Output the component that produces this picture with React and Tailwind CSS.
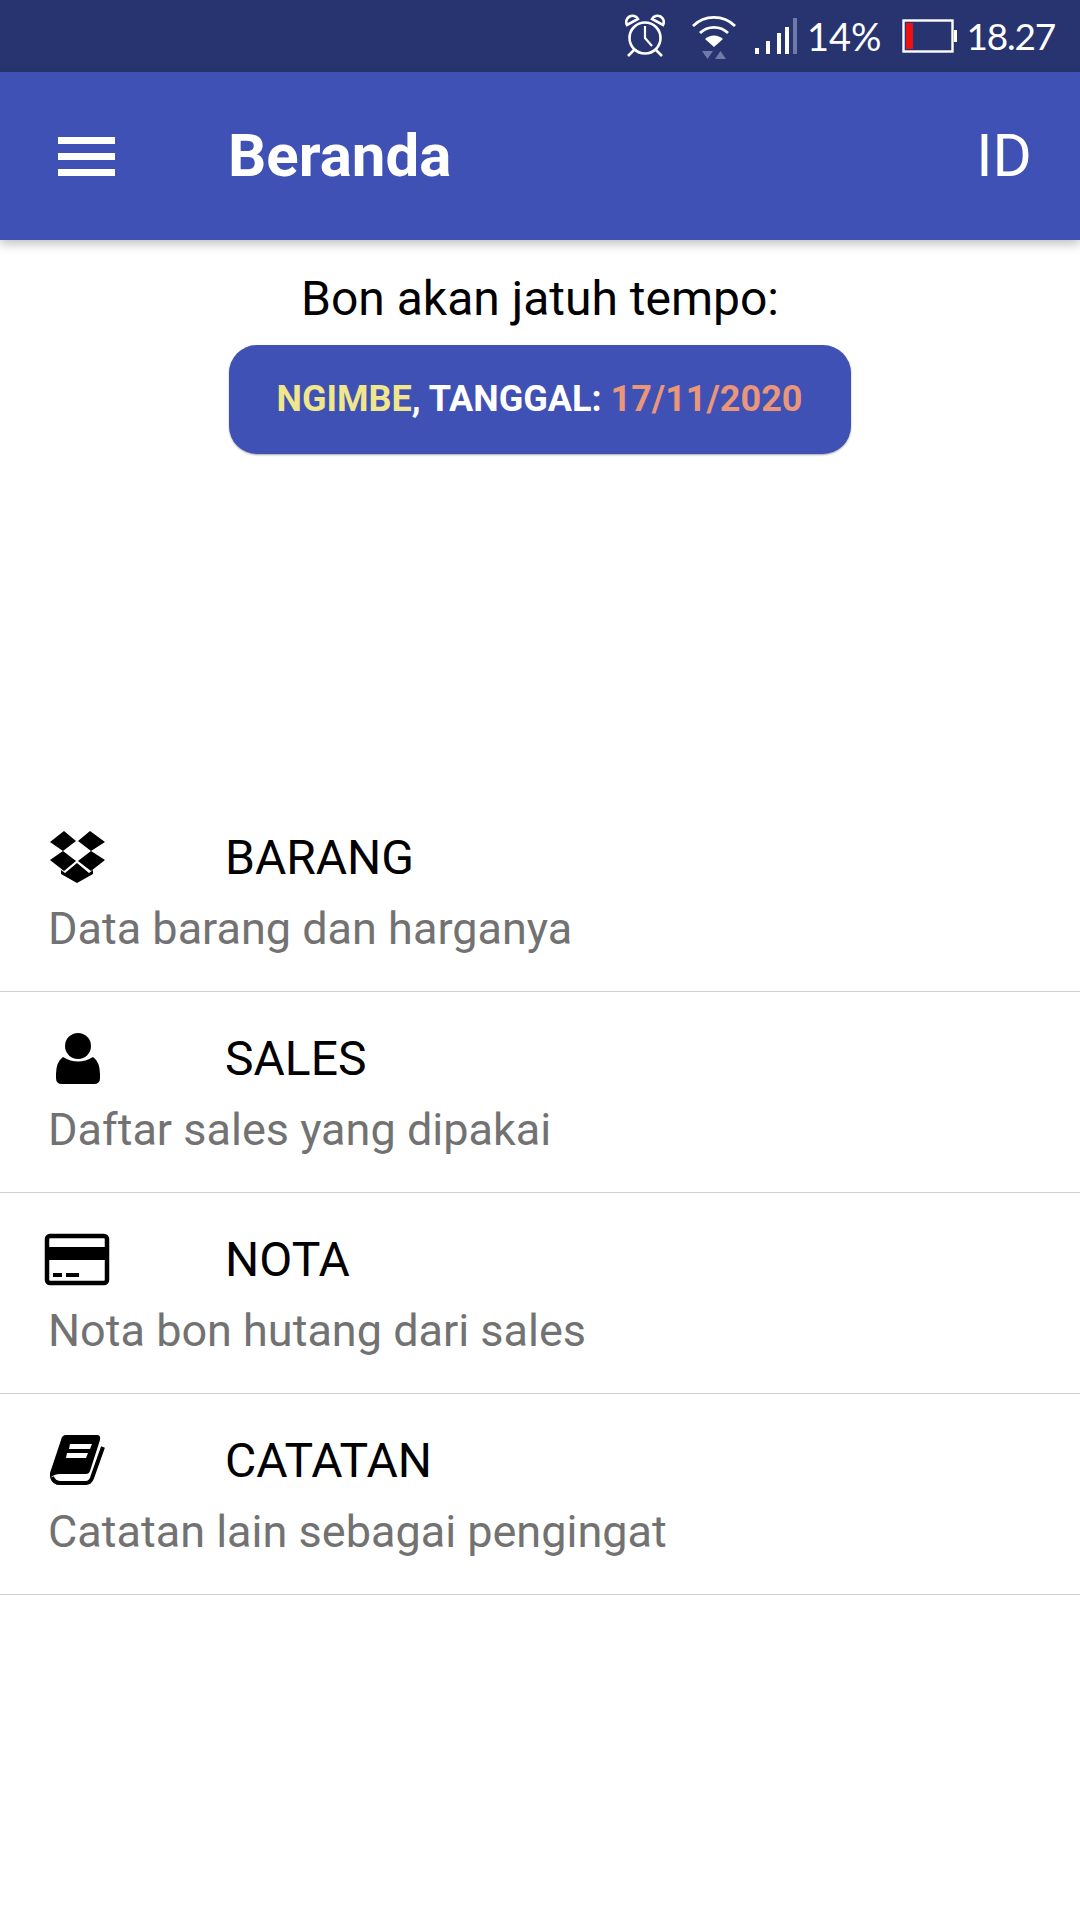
const BoxIcon = ({ y }) => (
  <svg width="100" height="90" viewBox={`0 ${y} 100 90`} className="shrink-0 -mt-[16px]">
    <path d="M20 31 34 20 46 30 33 40ZM48 30 60 20 75 31 61 40ZM20 49 33 40 46 50 34 60ZM48 50 61 40 75 49 61 60Z" />
    <path d="M31 59 35 62 47 52 59 62 63 59V63L47 72 31 63Z" />
  </svg>
);

const UserIcon = ({ y }) => (
  <svg width="100" height="90" viewBox={`0 ${y} 100 90`} className="shrink-0 -mt-[16px]">
    <circle cx="48" cy="30" r="13" />
    <path d="M33 41Q48 50 63 41 70 46 70 58V62Q70 68 64 68H32Q26 68 26 62V58Q26 46 33 41Z" />
  </svg>
);

const CardIcon = ({ y }) => (
  <svg width="100" height="90" viewBox={`0 ${y} 100 90`} className="shrink-0 -mt-[16px]">
    <rect x="17" y="20" width="60" height="47" rx="3" fill="none" stroke="black" strokeWidth="4.500" />
    <rect x="17" y="31" width="60" height="13" />
    <rect x="23" y="57" width="9" height="4" />
    <rect x="36" y="57" width="13" height="4" />
  </svg>
);

const BookIcon = ({ y }) => (
  <svg width="100" height="90" viewBox={`0 ${y} 100 90`} className="shrink-0 -mt-[16px]">
    <path d="M36 19H67Q71 19 70 24L60 55Q59 58 56 58H30Q24 58 20 62V57L31 24Q32 19 36 19Z" />
    <path d="M40 28H62L60 33H39ZM37 37H58L56 42H36Z" fill="white" />
    <path d="M22 61Q24 67 30 67H56Q60 67 62 62L73 31" fill="none" stroke="black" strokeWidth="4" />
  </svg>
);

const rows = [
  { title: "BARANG", sub: "Data barang dan harganya", Icon: BoxIcon, y: 1 },
  { title: "SALES", sub: "Daftar sales yang dipakai", Icon: UserIcon, y: -3 },
  { title: "NOTA", sub: "Nota bon hutang dari sales", Icon: CardIcon, y: -2 },
  { title: "CATATAN", sub: "Catatan lain sebagai pengingat", Icon: BookIcon, y: -1 },
];

const StatusIcons = () => (
  <>
    {/* alarm */}
    <svg width="40" height="44" viewBox="0 0 40 44" fill="none" stroke="white" strokeWidth="2.6" className="mr-[26px]">
      <circle cx="20" cy="24" r="15.5" />
      <path d="M20 12v12l7 8" strokeWidth="2.2" />
      <path d="M2 11a6 6 0 0 1 11-6zM38 11a6 6 0 0 0-11-6z" />
      <path d="M9 36l-6 6M31 36l6 6" />
    </svg>
    {/* wifi */}
    <svg width="46" height="48" viewBox="0 0 46 48" className="mr-[18px]">
      <g fill="none" stroke="white" strokeWidth="2.8">
        <path d="M2 14a30 30 0 0 1 42 0" />
        <path d="M9 21a20 20 0 0 1 28 0" />
      </g>
      <path d="M14 27a13 13 0 0 1 18 0l-9 8z" fill="white" />
      <path d="M11 39h11l-5.500 8zM24 47h11l-5.500-8z" fill="#6f7aa8" />
    </svg>
    {/* signal */}
    <svg width="42" height="38" viewBox="0 0 42 38" className="mr-[10px] mt-[2px]">
      <rect x="0" y="30" width="4" height="6" fill="white" />
      <rect x="11" y="23" width="4" height="13" fill="white" />
      <rect x="22" y="15" width="4" height="21" fill="white" />
      <rect x="30" y="9" width="4" height="27" fill="white" />
      <rect x="38" y="0" width="4" height="36" fill="#6f7aa8" />
    </svg>
  </>
);

const Battery = () => (
  <svg width="56" height="34" viewBox="0 0 56 34" className="ml-[21px] mr-[8px]">
    <rect x="1.500" y="1.500" width="49" height="31" fill="none" stroke="white" strokeWidth="2.4" />
    <rect x="4" y="4" width="7" height="26" fill="#ee1111" />
    <rect x="52" y="11" width="3" height="12" fill="white" />
  </svg>
);

export default function App() {
  return (
    <div className="w-[1080px] h-[1920px] bg-white font-['Roboto',sans-serif] overflow-hidden">
      <div className="h-[72px] bg-[#283470] flex items-center justify-end pr-[25px] text-white font-['Lato',sans-serif]">
        <StatusIcons />
        <span className="text-[38px]">14%</span>
        <Battery />
        <span className="text-[37px] tracking-[-1.2px]">18.27</span>
      </div>

      <div className="h-[168px] bg-[#3f51b5] flex items-center text-white shadow-[0_4px_10px_rgba(0,0,0,0.25)] relative">
        <div className="w-[228px] pl-[58px] flex flex-col gap-[9px]">
          <div className="w-[57px] h-[7px] bg-white" />
          <div className="w-[57px] h-[7px] bg-white" />
          <div className="w-[57px] h-[7px] bg-white" />
        </div>
        <div className="flex-1 text-[60px] font-bold">Beranda</div>
        <div className="pr-[48px] text-[60px]">ID</div>
      </div>

      <div className="h-[551px] flex flex-col items-center pt-[29px]">
        <div className="text-[48px] leading-[60px] text-black">Bon akan jatuh tempo:</div>
        <div className="mt-[16px] w-[622px] h-[109px] rounded-[28px] bg-[#3f51b5] shadow-[0_1px_2px_rgba(0,0,0,0.35)] flex items-center justify-center pb-[1px] pr-[1px] text-[36px] font-bold text-white">
          <span className="text-[#f0e68c]">NGIMBE</span>
          <span className="whitespace-pre">, TANGGAL: </span>
          <span className="text-[#e9967a]">17/11/2020</span>
        </div>
      </div>

      {rows.map(({ title, sub, Icon, y }) => (
        <div key={title} className="h-[201px] border-b border-[#d0d0d0] pt-[37px]">
          <div className="flex items-start h-[60px] pl-[30px]">
            <Icon y={y} />
            <span className="ml-[95px] text-[48px] leading-[60px] text-black">{title}</span>
          </div>
          <div className="mt-[11px] pl-[48px] text-[45px] leading-[60px] text-[#727272]">{sub}</div>
        </div>
      ))}
    </div>
  );
}
